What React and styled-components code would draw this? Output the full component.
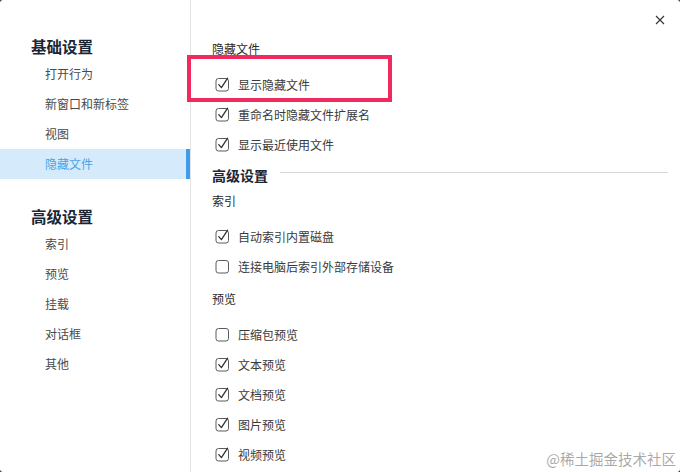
import React from "react";
import styled, { createGlobalStyle } from "styled-components";

const GlobalStyle = createGlobalStyle`
  html, body {
    margin: 0;
    padding: 0;
    background: #2b2b2b;
  }
  body {
    font-family: "Noto Sans CJK SC", "Noto Sans", sans-serif;
  }
`;

const Window = styled.div`
  position: relative;
  width: 680px;
  height: 472px;
  display: flex;
  background: #fff;
  border-radius: 3px;
  overflow: hidden;
`;

const Sidebar = styled.div`
  width: 190px;
  flex-shrink: 0;
  border-right: 1px solid #e4e4e4;
  padding-top: 33px;
  box-sizing: content-box;
`;

const NavHeading = styled.div`
  height: 26px;
  line-height: 26px;
  padding-left: 31px;
  margin-top: ${p => (p.$first ? 0 : 24)}px;
  font-size: 15.5px;
  font-weight: 700;
  color: #1c2533;
`;

const NavItem = styled.div`
  height: 30px;
  line-height: 30px;
  padding-left: 45px;
  font-size: 12px;
  color: ${p => (p.$active ? "#4ba3e6" : "#4a4a4a")};
  background: ${p => (p.$active ? "#d5ebfc" : "transparent")};
  border-right: 4px solid ${p => (p.$active ? "#3d9ded" : "transparent")};
`;

const Content = styled.div`
  flex: 1;
  padding: 39px 12px 0 21px;
`;

const SubLabel = styled.div`
  height: 20px;
  line-height: 20px;
  font-size: 12px;
  color: #2a2a2a;
  margin-top: ${p => p.$top || 0}px;
  margin-bottom: 10px;
`;

const SectionHeading = styled.div`
  display: flex;
  align-items: center;
  height: 28px;
  margin-top: 2px;
  font-size: 14px;
  font-weight: 700;
  color: #1c2533;

  &::after {
    content: "";
    flex: 1;
    height: 1px;
    background: #d6d6d6;
    margin-left: 12px;
    margin-top: -5px;
  }
`;

const Row = styled.label`
  display: flex;
  align-items: center;
  gap: 7px;
  height: 30px;
  margin-left: 3px;
  font-size: 12px;
  color: #3a3a3a;
`;

const CloseButton = styled.div`
  position: absolute;
  top: 14px;
  right: 14px;
  width: 12px;
  height: 12px;
  display: flex;
  align-items: center;
  justify-content: center;
`;

const Highlight = styled.div`
  position: absolute;
  left: 187px;
  top: 55px;
  width: 205px;
  height: 47px;
  box-sizing: border-box;
  border: 4px solid #f2295f;
  pointer-events: none;
`;

const Watermark = styled.div`
  position: absolute;
  right: 4px;
  bottom: 3px;
  font-size: 14.5px;
  color: rgba(140, 140, 140, 0.75);
`;

const Check = ({ checked }) => (
  <svg width="16" height="16" viewBox="0 0 16 16">
    <rect
      x="1"
      y="2.5"
      width="12.5"
      height="12.5"
      rx="2.5"
      fill="none"
      stroke="#5a5a5a"
      strokeWidth="1"
    />
    {checked && (
      <path
        d="M3.8 8.6 L6.4 11.6 L12.6 2.2"
        fill="none"
        stroke="#333"
        strokeWidth="1.3"
        strokeLinecap="round"
        strokeLinejoin="round"
      />
    )}
  </svg>
);

const nav = [
  { title: "基础设置", items: ["打开行为", "新窗口和新标签", "视图", "隐藏文件"] },
  { title: "高级设置", items: ["索引", "预览", "挂载", "对话框", "其他"] },
];

const Option = ({ checked, children }) => (
  <Row>
    <Check checked={checked} />
    {children}
  </Row>
);

export default function App() {
  return (
    <Window>
      <GlobalStyle />
      <Sidebar>
        {nav.map((group, gi) => (
          <div key={group.title}>
            <NavHeading $first={gi === 0}>{group.title}</NavHeading>
            {group.items.map(item => (
              <NavItem key={item} $active={item === "隐藏文件"}>
                {item}
              </NavItem>
            ))}
          </div>
        ))}
      </Sidebar>
      <Content>
        <SubLabel>隐藏文件</SubLabel>
        <Option checked>显示隐藏文件</Option>
        <Option checked>重命名时隐藏文件扩展名</Option>
        <Option checked>显示最近使用文件</Option>
        <SectionHeading>高级设置</SectionHeading>
        <SubLabel $top={2}>索引</SubLabel>
        <Option checked>自动索引内置磁盘</Option>
        <Option>连接电脑后索引外部存储设备</Option>
        <SubLabel $top={8}>预览</SubLabel>
        <Option>压缩包预览</Option>
        <Option checked>文本预览</Option>
        <Option checked>文档预览</Option>
        <Option checked>图片预览</Option>
        <Option checked>视频预览</Option>
      </Content>
      <CloseButton>
        <svg width="10" height="10" viewBox="0 0 10 10">
          <path d="M1 1 L9 9 M9 1 L1 9" stroke="#333" strokeWidth="1.1" />
        </svg>
      </CloseButton>
      <Highlight />
      <Watermark>@稀土掘金技术社区</Watermark>
    </Window>
  );
}
